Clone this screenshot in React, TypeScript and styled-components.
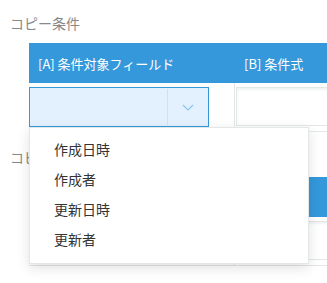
import React from "react";
import styled, { createGlobalStyle } from "styled-components";

const GlobalStyle = createGlobalStyle`
  html, body {
    margin: 0;
    padding: 0;
    background: #ffffff;
    font-family: "Noto Sans CJK JP", "Noto Sans", sans-serif;
  }
`;

const Page = styled.div`
  width: 327px;
  height: 283px;
  overflow: hidden;
  padding-top: 13px;
  box-sizing: border-box;
`;

const Section = styled.div`
  & + & {
    margin-top: 15px;
  }
`;

const Title = styled.div`
  padding-left: 10px;
  height: 20px;
  line-height: 20px;
  font-size: 14px;
  color: #888888;
  margin-bottom: 10px;
  white-space: nowrap;
`;

const Table = styled.div`
  margin-left: 29px;
  width: 400px;
`;

const HeaderRow = styled.div`
  display: flex;
  height: 40px;
  background: #3498db;
`;

const HeaderCell = styled.div<{ $width: number; $pad: number }>`
  width: ${(p) => p.$width}px;
  flex-shrink: 0;
  padding-left: ${(p) => p.$pad}px;
  box-sizing: border-box;
  display: flex;
  align-items: center;
  font-size: 13px;
  color: #ffffff;
  white-space: nowrap;
`;

const BodyRow = styled.div`
  display: flex;
  border-bottom: 1px solid #e3e7e8;
`;

const BodyCell = styled.div<{ $width: number; $divider?: boolean }>`
  width: ${(p) => p.$width}px;
  flex-shrink: 0;
  box-sizing: border-box;
  padding: 4px 0 4px ${(p) => (p.$divider ? 0 : 1)}px;
  border-right: ${(p) => (p.$divider ? "1px solid #e3e7e8" : "none")};
  position: relative;
`;

const Select = styled.div`
  width: 180px;
  height: 40px;
  box-sizing: border-box;
  border: 1px solid #3498db;
  background: #e2f1fd;
  display: flex;
`;

const SelectValue = styled.div`
  flex: 1;
`;

const SelectArrow = styled.div`
  width: 40px;
  margin: 1px 0;
  border-left: 1px solid #d9dfe3;
  display: flex;
  align-items: center;
  justify-content: center;
`;

const Input = styled.div`
  width: 200px;
  height: 39px;
  box-sizing: border-box;
  border: 1px solid #e3e7e8;
  box-shadow: inset 0 2px 3px #f0f2f3;
  background: #ffffff;
`;

const Menu = styled.div`
  position: absolute;
  top: 44px;
  left: 0;
  width: 280px;
  box-sizing: border-box;
  padding: 6px 0 9px;
  background: #ffffff;
  border: 1px solid #e3e7e8;
  box-shadow: 0 4px 12px rgba(0, 0, 0, 0.12);
  z-index: 10;
`;

const MenuItem = styled.div`
  height: 30px;
  line-height: 30px;
  padding-left: 24px;
  font-size: 14px;
  color: #333333;
  white-space: nowrap;
`;

const Chevron = () => (
  <svg width="12" height="7" viewBox="0 0 12 7">
    <path d="M1 1 L6 6 L11 1" fill="none" stroke="#8ec5ee" strokeWidth="1.2" />
  </svg>
);

const options = ["作成日時", "作成者", "更新日時", "更新者"];

export default function App() {
  return (
    <Page>
      <GlobalStyle />
      <Section>
        <Title>コピー条件</Title>
        <Table>
          <HeaderRow>
            <HeaderCell $width={206} $pad={9}>
              [A] 条件対象フィールド
            </HeaderCell>
            <HeaderCell $width={194} $pad={9}>
              [B] 条件式
            </HeaderCell>
          </HeaderRow>
          <BodyRow>
            <BodyCell $width={206} $divider>
              <Select>
                <SelectValue />
                <SelectArrow>
                  <Chevron />
                </SelectArrow>
              </Select>
              <Menu>
                {options.map((o) => (
                  <MenuItem key={o}>{o}</MenuItem>
                ))}
              </Menu>
            </BodyCell>
            <BodyCell $width={194}>
              <Input />
            </BodyCell>
          </BodyRow>
        </Table>
      </Section>
      <Section>
        <Title>コピー先</Title>
        <Table>
          <HeaderRow>
            <HeaderCell $width={206} $pad={9} />
            <HeaderCell $width={194} $pad={9} />
          </HeaderRow>
          <BodyRow>
            <BodyCell $width={206} $divider>
              <Select>
                <SelectValue />
                <SelectArrow>
                  <Chevron />
                </SelectArrow>
              </Select>
            </BodyCell>
            <BodyCell $width={194}>
              <Input />
            </BodyCell>
          </BodyRow>
        </Table>
      </Section>
    </Page>
  );
}
